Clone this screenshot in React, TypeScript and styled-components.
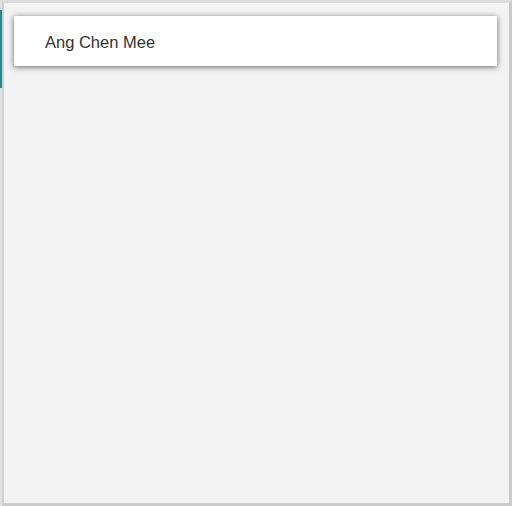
import React from 'react';
import styled, { createGlobalStyle } from 'styled-components';

const GlobalStyle = createGlobalStyle`
  html, body {
    margin: 0;
    padding: 0;
    background: #f3f3f3;
  }
  body {
    font-family: 'Liberation Sans', Arial, sans-serif;
  }
`;

const Page = styled.div`
  display: flex;
  width: 512px;
  height: 506px;
  box-sizing: border-box;
`;

// sliver of the neighbouring panel that peeks in on the left
const EdgeStrip = styled.div`
  width: 2px;
  flex-shrink: 0;
  display: flex;
  flex-direction: column;
  background: #e2e2e2;
`;

const EdgeAccent = styled.div`
  height: 78px;
  margin-top: 10px;
  background: #1f8c92;
`;

const Frame = styled.div`
  flex: 1;
  box-sizing: border-box;
  background: #f3f3f3;
  border-top: 3px solid #dcdcdc;
  border-right: 3px solid #cbcbcb;
  border-bottom: 3px solid #cbcbcb;
  border-left: 2px solid #d0d0d0;
  padding: 13px 12px 0 10px;
`;

const NameCard = styled.div`
  height: 50px;
  display: flex;
  align-items: center;
  padding-left: 31px;
  background: #ffffff;
  box-shadow: 0 1px 6px rgba(0, 0, 0, 0.6);
`;

const Name = styled.span`
  font-size: 16.5px;
  color: #333333;
  padding-top: 2px;
`;

const App: React.FC = () => {
  return (
    <>
      <GlobalStyle />
      <Page>
        <EdgeStrip>
          <EdgeAccent />
        </EdgeStrip>
        <Frame>
          <NameCard>
            <Name>Ang Chen Mee</Name>
          </NameCard>
        </Frame>
      </Page>
    </>
  );
};

export default App;
